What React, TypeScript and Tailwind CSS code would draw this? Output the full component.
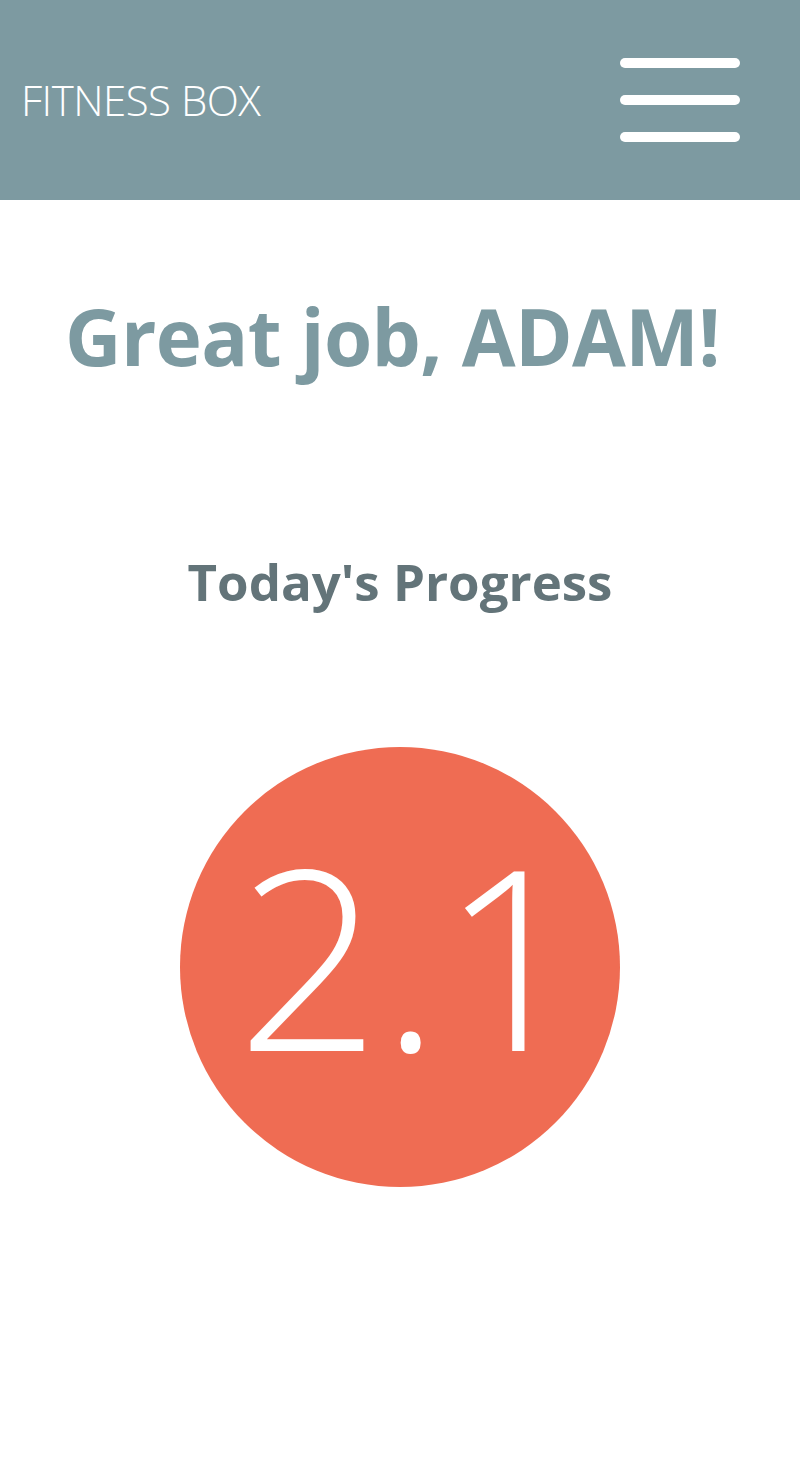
export default function App() {
  return (
    <div className="min-h-[1464px] bg-white font-['Open_Sans',sans-serif]">
      <header className="h-[200px] bg-[#7d9aa1] flex items-center justify-between pl-[21px] pr-[60px]">
        <h1 className="text-[42px] font-light text-white leading-none tracking-[-0.5px]">FITNESS BOX</h1>
        <button className="flex flex-col gap-[27px] w-[120px]">
          <span className="block h-[10px] w-full rounded-full bg-white"></span>
          <span className="block h-[10px] w-full rounded-full bg-white"></span>
          <span className="block h-[10px] w-full rounded-full bg-white"></span>
        </button>
      </header>

      <main className="flex flex-col items-center">
        <h2 className="mt-[97px] pr-[15px] text-[78px] font-bold leading-none text-[#7d9aa1] tracking-[-0.6px]">
          Great job, ADAM!
        </h2>

        <h3 className="mt-[181px] text-[51px] font-bold leading-none text-[#637479]">
          Today's Progress
        </h3>

        <div className="mt-[140px] w-[440px] h-[440px] rounded-full bg-[#ef6c53] flex items-center justify-center pl-[21px] pb-[26px]">
          <span className="text-[252px] font-[350] leading-none text-white">2.1</span>
        </div>
      </main>
    </div>
  );
}
